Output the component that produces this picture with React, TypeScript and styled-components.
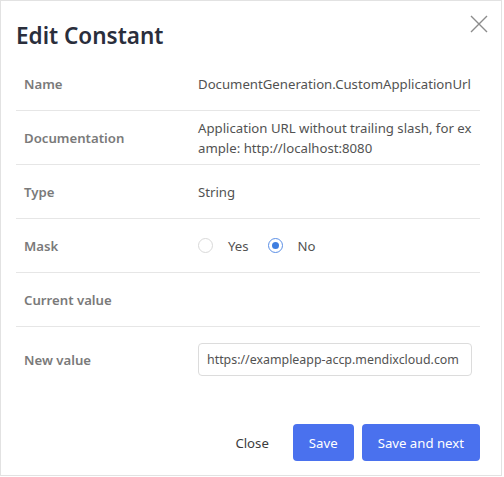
import React from "react";
import styled, { createGlobalStyle } from "styled-components";

const GlobalStyle = createGlobalStyle`
  html, body { margin: 0; padding: 0; background: #ffffff; }
  body { font-family: "Noto Sans", "Open Sans", sans-serif; }
  * { box-sizing: border-box; }
`;

const Dialog = styled.div`
  position: relative;
  width: 502px;
  border: 1px solid #e2e2e2;
  background: #ffffff;
  display: flex;
  flex-direction: column;
`;

const Header = styled.div`
  padding: 19px 16px 0 15px;
  margin-bottom: 5px;
`;

const Title = styled.h1`
  margin: 0;
  font-size: 22.5px;
  line-height: 32px;
  font-weight: 600;
  color: #2a2e3c;
`;

const CloseIcon = styled.button`
  position: absolute;
  top: 13px;
  right: 12px;
  width: 20px;
  height: 20px;
  padding: 0;
  border: none;
  background: transparent;
  display: flex;
  align-items: center;
  justify-content: center;
  cursor: pointer;
`;

const Body = styled.div`
  padding: 0 21px 0 15px;
  display: flex;
  flex-direction: column;
`;

const Row = styled.div<{ $last?: boolean }>`
  display: grid;
  grid-template-columns: 174px 1fr;
  align-items: center;
  min-height: ${(p) => (p.$last ? "auto" : "54px")};
  padding: ${(p) => (p.$last ? "16px 8px" : "0 8px")};
  border-bottom: ${(p) => (p.$last ? "none" : "1px solid #e6e6e6")};
`;

const Label = styled.div`
  font-size: 13.2px;
  line-height: 20px;
  font-weight: 600;
  color: #7a7a7a;
`;

const Value = styled.div`
  font-size: 13.2px;
  line-height: 20px;
  color: #525252;
  word-break: break-all;
`;

const RadioGroup = styled.div`
  display: flex;
  align-items: center;
`;

const RadioOption = styled.label`
  display: flex;
  align-items: center;
  gap: 15px;
  margin-right: 19px;
  font-size: 13.2px;
  line-height: 20px;
  color: #525252;
  cursor: pointer;
`;

const RadioCircle = styled.span<{ $checked?: boolean }>`
  width: 15px;
  height: 15px;
  border-radius: 50%;
  border: 1px solid ${(p) => (p.$checked ? "#5b8fe6" : "#d9d9d9")};
  background: #ffffff;
  display: flex;
  align-items: center;
  justify-content: center;
  &::after {
    content: "";
    display: ${(p) => (p.$checked ? "block" : "none")};
    width: 7px;
    height: 7px;
    border-radius: 50%;
    background: #3f7ee0;
  }
`;

const TextInput = styled.input`
  width: 100%;
  height: 33px;
  border: 1px solid #dcdcdc;
  border-radius: 4px;
  padding: 0 8px;
  font-family: "Noto Sans", "Open Sans", sans-serif;
  font-size: 12.4px;
  color: #525252;
  outline: none;
`;

const Footer = styled.div`
  display: flex;
  justify-content: flex-end;
  align-items: center;
  gap: 8px;
  padding: 32px 21px 14px 15px;
`;

const Button = styled.button<{ $primary?: boolean }>`
  height: 37px;
  padding: 0 16px;
  border: none;
  border-radius: 4px;
  font-family: "Noto Sans", "Open Sans", sans-serif;
  font-size: 13.2px;
  cursor: pointer;
  background: ${(p) => (p.$primary ? "#4a71ee" : "transparent")};
  color: ${(p) => (p.$primary ? "#ffffff" : "#3c3c3c")};
`;

export default function App() {
  return (
    <>
      <GlobalStyle />
      <Dialog>
        <Header>
          <Title>Edit Constant</Title>
        </Header>
        <CloseIcon aria-label="Close">
          <svg width="18" height="18" viewBox="0 0 18 18">
            <path d="M1 1 L17 17 M17 1 L1 17" stroke="#8c8c8c" strokeWidth="1.4" fill="none" />
          </svg>
        </CloseIcon>
        <Body>
          <Row>
            <Label>Name</Label>
            <Value>DocumentGeneration.CustomApplicationUrl</Value>
          </Row>
          <Row>
            <Label>Documentation</Label>
            <Value>Application URL without trailing slash, for example: http://localhost:8080</Value>
          </Row>
          <Row>
            <Label>Type</Label>
            <Value>String</Value>
          </Row>
          <Row>
            <Label>Mask</Label>
            <RadioGroup>
              <RadioOption>
                <RadioCircle />
                Yes
              </RadioOption>
              <RadioOption>
                <RadioCircle $checked />
                No
              </RadioOption>
            </RadioGroup>
          </Row>
          <Row>
            <Label>Current value</Label>
            <Value />
          </Row>
          <Row $last>
            <Label>New value</Label>
            <TextInput defaultValue="https://exampleapp-accp.mendixcloud.com" />
          </Row>
        </Body>
        <Footer>
          <Button>Close</Button>
          <Button $primary>Save</Button>
          <Button $primary>Save and next</Button>
        </Footer>
      </Dialog>
    </>
  );
}
